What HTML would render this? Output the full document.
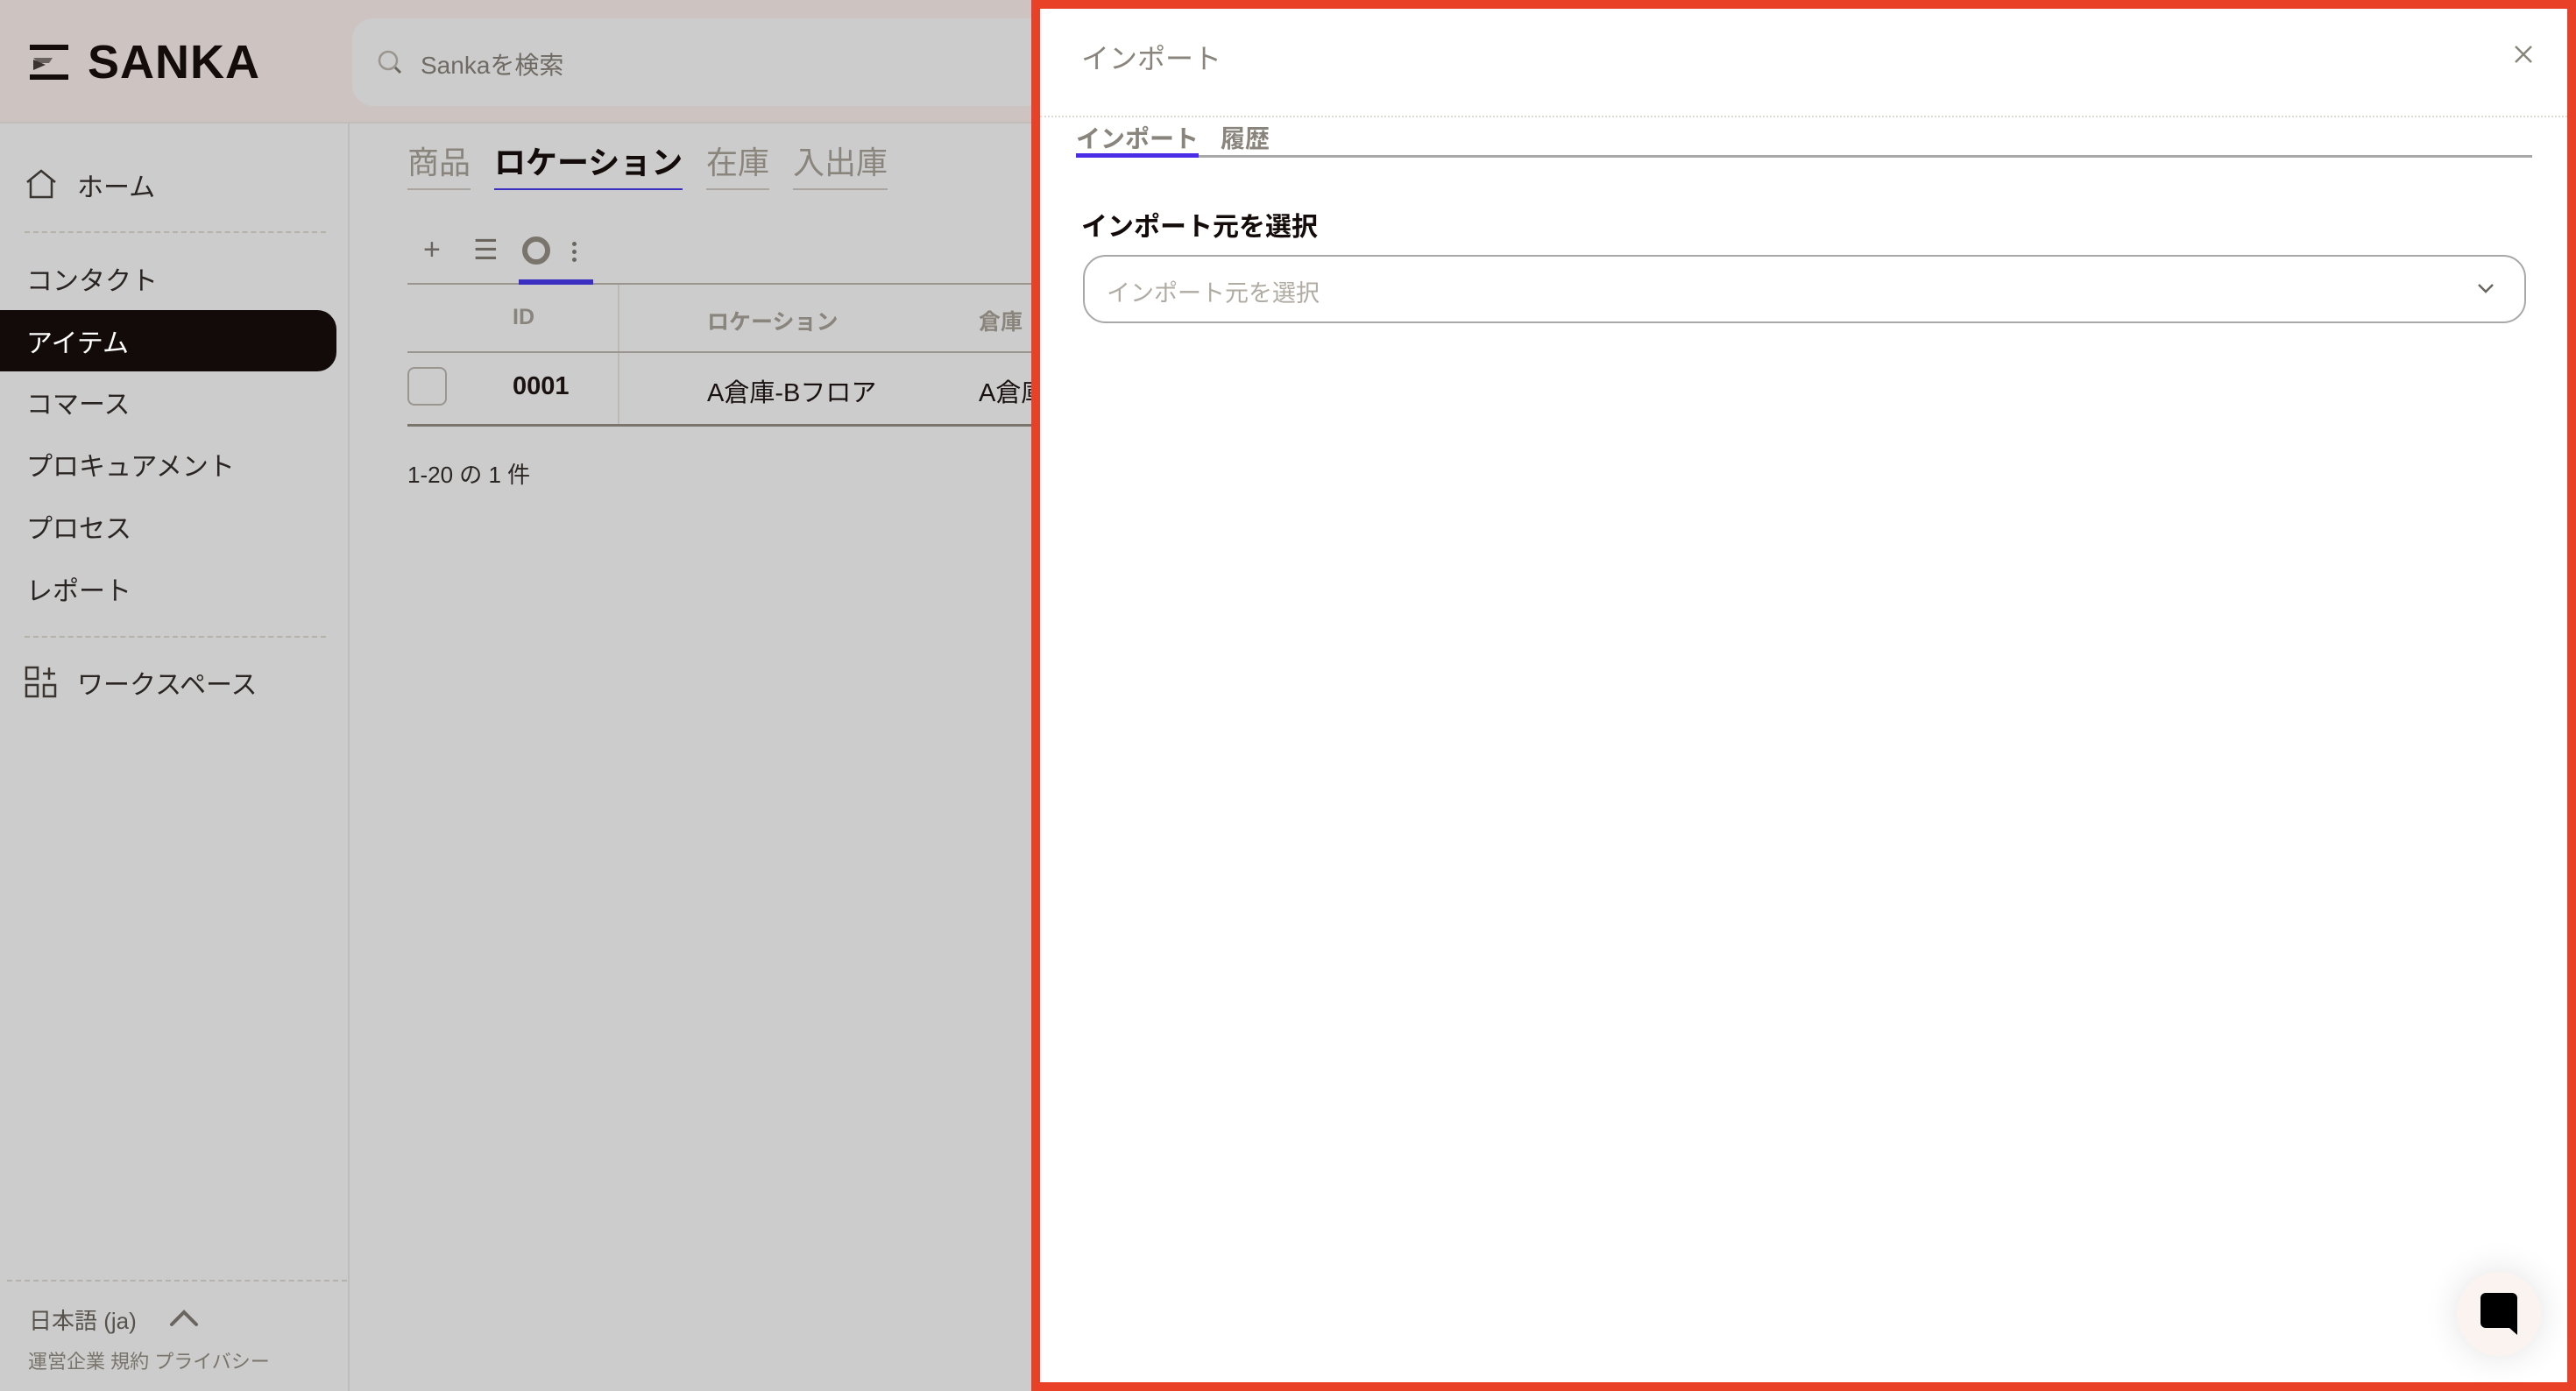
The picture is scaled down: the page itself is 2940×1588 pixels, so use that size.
<!DOCTYPE html>
<html><head><meta charset="utf-8"><style>
*{margin:0;padding:0;box-sizing:border-box}
body{width:2940px;height:1588px;overflow:hidden;background:#cccccc;font-family:"Liberation Sans","Noto Sans CJK JP",sans-serif;position:relative;color:#1a1210}
.a{position:absolute;white-space:nowrap}
.hdr{left:0;top:0;width:1177px;height:141px;background:#cdc3c1;border-bottom:2px solid #c2bcba}
.side{left:0;top:141px;width:399px;height:1447px;border-right:2px solid #bdbdbd}
.nav{font-size:30px;color:#2a2522;left:30px}
.dash{border-top:2px dashed #b5b1ab;height:0}
.gray{color:#8a857c}
</style></head><body>
<div class="a hdr"></div>
<svg class="a" style="left:34px;top:51px" width="44" height="40" viewBox="0 0 44 40"><rect x="0" y="0" width="44" height="6" fill="#140c0a"/><path d="M4 15h22l-4 6H10z" fill="#6a625e"/><rect x="0" y="34" width="44" height="6" fill="#140c0a"/><path d="M4 17l14 6-14 6z" fill="#3a322e"/></svg>
<div class="a" style="left:100px;top:40px;font-size:54px;font-weight:bold;letter-spacing:1px;color:#140c0a">SANKA</div>
<div class="a" style="left:402px;top:21px;width:800px;height:100px;background:#cccccc;border-radius:24px"></div>
<svg class="a" style="left:430px;top:56px" width="32" height="32" viewBox="0 0 32 32"><circle cx="13" cy="13" r="10" fill="none" stroke="#9a958f" stroke-width="2.5"/><path d="M21 21l6 6" stroke="#6a655f" stroke-width="3"/></svg>
<div class="a" style="left:480px;top:53px;font-size:28px;color:#6f6a63">Sankaを検索</div>

<div class="a side"></div>
<svg class="a" style="left:28px;top:192px" width="38" height="36" viewBox="0 0 38 36"><path d="M3 16L19 3l16 13M7 13v20h24V13" fill="none" stroke="#3a3531" stroke-width="2.5"/></svg>
<div class="a nav" style="left:88px;top:189px">ホーム</div>
<div class="a dash" style="left:28px;top:264px;width:344px"></div>
<div class="a nav" style="top:296px">コンタクト</div>
<div class="a" style="left:0;top:354px;width:384px;height:70px;background:#130b09;border-radius:0 22px 22px 0"></div>
<div class="a nav" style="top:367px;color:#fff">アイテム</div>
<div class="a nav" style="top:437px">コマース</div>
<div class="a nav" style="top:508px">プロキュアメント</div>
<div class="a nav" style="top:579px">プロセス</div>
<div class="a nav" style="top:650px">レポート</div>
<div class="a dash" style="left:28px;top:726px;width:344px"></div>
<svg class="a" style="left:28px;top:760px" width="38" height="38" viewBox="0 0 38 38"><g fill="none" stroke="#3a3531" stroke-width="2.5"><rect x="2" y="2" width="13" height="13"/><rect x="2" y="22" width="13" height="13"/><rect x="22" y="22" width="13" height="13"/><path d="M28 2v14M21 9h14"/></g></svg>
<div class="a nav" style="left:88px;top:757px">ワークスペース</div>
<div class="a dash" style="left:8px;top:1461px;width:388px"></div>
<div class="a" style="left:33px;top:1488px;font-size:26px;color:#57524c">日本語 (ja)</div>
<svg class="a" style="left:192px;top:1492px" width="36" height="24" viewBox="0 0 36 24"><path d="M4 20L18 6l14 14" fill="none" stroke="#6a655f" stroke-width="4" stroke-linecap="round"/></svg>
<div class="a" style="left:32px;top:1537px;font-size:22px;color:#7a756c">運営企業 規約 プライバシー</div>

<div class="a gray" style="left:465px;top:157px;font-size:36px;border-bottom:2px solid #aaa59e;padding-bottom:6px">商品</div>
<div class="a" style="left:564px;top:157px;font-size:36px;font-weight:bold;color:#140c0a;border-bottom:2px solid #3a2fc0;padding-bottom:6px">ロケーション</div>
<div class="a gray" style="left:806px;top:157px;font-size:36px;border-bottom:2px solid #aaa59e;padding-bottom:6px">在庫</div>
<div class="a gray" style="left:905px;top:157px;font-size:36px;border-bottom:2px solid #aaa59e;padding-bottom:6px">入出庫</div>
<div class="a" style="left:483px;top:266px;font-size:34px;color:#6a655f">+</div>
<div class="a" style="left:540px;top:266px;font-size:32px;color:#6a655f">☰</div>
<div class="a" style="left:596px;top:270px;width:32px;height:32px;border:6px solid #7a756c;border-radius:50%"></div>
<div class="a" style="left:653px;top:276px;width:5px;height:5px;background:#6a655f;border-radius:50%;box-shadow:0 9px 0 #6a655f,0 18px 0 #6a655f"></div>
<div class="a" style="left:465px;top:323px;width:712px;height:2px;background:#9a958f"></div>
<div class="a" style="left:592px;top:319px;width:85px;height:6px;background:#3a2fc0"></div>
<div class="a" style="left:705px;top:325px;width:2px;height:160px;background:#bcb8b3"></div>
<div class="a gray" style="left:585px;top:348px;font-size:25px;font-weight:bold">ID</div>
<div class="a gray" style="left:807px;top:348px;font-size:25px;font-weight:bold">ロケーション</div>
<div class="a gray" style="left:1117px;top:348px;font-size:25px;font-weight:bold">倉庫</div>
<div class="a" style="left:465px;top:401px;width:712px;height:2px;background:#9a958f"></div>
<div class="a" style="left:465px;top:419px;width:45px;height:44px;border:2px solid #9a958f;border-radius:8px"></div>
<div class="a" style="left:585px;top:425px;font-size:29px;font-weight:bold">0001</div>
<div class="a" style="left:807px;top:425px;font-size:29px">A倉庫-Bフロア</div>
<div class="a" style="left:1117px;top:425px;font-size:29px">A倉庫</div>
<div class="a" style="left:465px;top:484px;width:712px;height:3px;background:#7a756c"></div>
<div class="a" style="left:465px;top:522px;font-size:26px;color:#2a2522">1-20 の 1 件</div>

<div class="a" style="left:1177px;top:0;width:1763px;height:1588px;background:#fff;border:10px solid #e94128"></div>
<div class="a gray" style="left:1234px;top:42px;font-size:32px">インポート</div>
<svg class="a" style="left:2868px;top:50px" width="24" height="24" viewBox="0 0 24 24"><path d="M3 3l18 18M21 3L3 21" stroke="#8a857c" stroke-width="2.5"/></svg>
<div class="a" style="left:1187px;top:132px;width:1743px;border-top:2px dotted #dedbd4"></div>
<div class="a gray" style="left:1228px;top:137px;font-size:28px;font-weight:bold">インポート</div>
<div class="a gray" style="left:1393px;top:137px;font-size:28px;font-weight:bold">履歴</div>
<div class="a" style="left:1228px;top:177px;width:1662px;height:3px;background:#a8a8a8"></div>
<div class="a" style="left:1228px;top:175px;width:140px;height:5px;background:#4a2de6"></div>
<div class="a" style="left:1234px;top:234px;font-size:30px;font-weight:bold;color:#140c0a">インポート元を選択</div>
<div class="a" style="left:1236px;top:291px;width:1647px;height:78px;border:2px solid #a8a8a8;border-radius:26px"></div>
<div class="a" style="left:1263px;top:313px;font-size:27px;color:#b0aba3">インポート元を選択</div>
<svg class="a" style="left:2826px;top:321px" width="22" height="16" viewBox="0 0 22 16"><path d="M3 4l8 8 8-8" fill="none" stroke="#6a655f" stroke-width="2.5"/></svg>
<div class="a" style="left:2804px;top:1452px;width:96px;height:96px;border-radius:50%;background:#fbf3f0;box-shadow:0 0 40px rgba(0,0,0,.12)"></div>
<svg class="a" style="left:2831px;top:1476px" width="42" height="48" viewBox="0 0 42 48"><path d="M6 0h30a6 6 0 0 1 6 6v42l-9-8H6a6 6 0 0 1-6-6V6a6 6 0 0 1 6-6z" fill="#000"/></svg>
</body></html>
